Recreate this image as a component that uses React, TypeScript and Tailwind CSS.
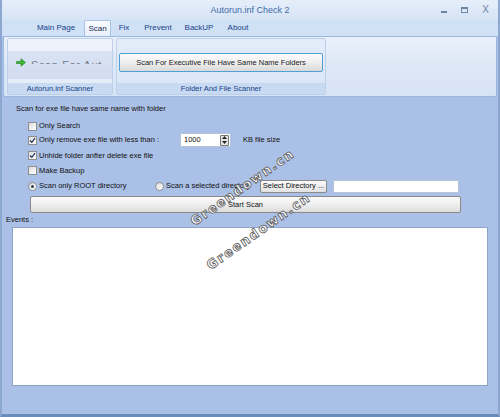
import React from 'react';

function CheckBox({ checked, label }: { checked?: boolean; label: string }) {
  return (
    <div className="flex items-center h-[14px]">
      <div className="w-[9px] h-[9px] shrink-0 border border-[#8f8f8f] bg-gradient-to-br from-[#dcdcdc] to-white flex items-center justify-center">
        {checked && (
          <svg width="7" height="7" viewBox="0 0 7 7">
            <path d="M1 3.5 L2.8 5.3 L6 1.2" stroke="#2a3b5a" strokeWidth="1.3" fill="none" />
          </svg>
        )}
      </div>
      <span className="ml-[2px] whitespace-nowrap">{label}</span>
    </div>
  );
}

function Radio({ checked, label }: { checked?: boolean; label: string }) {
  return (
    <div className="flex items-center">
      <div className="w-[9px] h-[9px] shrink-0 rounded-full border border-[#8f8f8f] bg-gradient-to-br from-[#dcdcdc] to-white flex items-center justify-center">
        {checked && <div className="w-[3px] h-[3px] rounded-full bg-[#2a3b5a]" />}
      </div>
      <span className="ml-[2px] whitespace-nowrap">{label}</span>
    </div>
  );
}

function Watermark({ className }: { className: string }) {
  return (
    <div
      className={`absolute pointer-events-none whitespace-nowrap text-white font-bold text-[13px] tracking-[1.5px] -rotate-[35deg] origin-left [-webkit-text-stroke:0.8px_#5a5a5a] ${className}`}
      style={{ fontFamily: '"DejaVu Sans", sans-serif' }}
    >
      Greendown.cn
    </div>
  );
}

export default function App() {
  return (
    <div
      className="relative w-[500px] h-[417px] overflow-hidden bg-[#aac0e6] border-l-2 border-r-2 border-b-[3px] border-l-[#8ca7d0] border-r-[#8ca7d0] border-b-[#6a8cbd] text-[7.5px] text-[#111] flex flex-col"
      style={{ fontFamily: '"Liberation Sans", Arial, sans-serif' }}
    >
      {/* title bar */}
      <div className="h-[20px] shrink-0 bg-gradient-to-b from-[#e6eefa] to-[#d6e4f6] grid grid-cols-[70px_1fr_70px] items-center">
        <div />
        <div className="text-center text-[9px] text-[#3f6aa6] pt-[1px]">Autorun.inf Check 2</div>
        <div className="flex items-center justify-end gap-[14px] pr-[9px] text-[#6e84a3]">
          <span className="w-[6px] h-[1.5px] bg-[#6e84a3] mt-[4px]" />
          <span className="w-[7px] h-[6px] border border-[#6e84a3] border-t-2" />
          <span className="text-[10px] leading-none">X</span>
        </div>
      </div>

      {/* tabs */}
      <div className="h-[16px] shrink-0 bg-[#d1e1f5] flex items-end pl-[34px] text-[8px] text-[#15428b]">
        <div className="w-[40px] h-[16px] flex items-center justify-center">Main Page</div>
        <div className="w-[27px] h-[16px] ml-[8px] flex items-center justify-center bg-gradient-to-b from-[#f9fbfe] to-[#e8effa] border border-b-0 border-[#a9c3e6] rounded-t-[2px] text-[#1a2c50]">
          Scan
        </div>
        <div className="w-[16px] h-[16px] ml-[5px] flex items-center justify-center">Fix</div>
        <div className="w-[36px] h-[16px] ml-[8px] flex items-center justify-center">Prevent</div>
        <div className="w-[34px] h-[16px] ml-[6px] flex items-center justify-center">BackUP</div>
        <div className="w-[28px] h-[16px] ml-[8px] flex items-center justify-center">About</div>
      </div>

      {/* ribbon panel */}
      <div className="h-[61px] shrink-0 mx-[1px] border border-[#9ab9e2] rounded-[2px] bg-gradient-to-b from-[#e9f0fa] via-[#dde8f7] to-[#d7e4f6] flex gap-[3px] px-[3px] pt-[1px] pb-[1px]">
        <div className="w-[106px] flex flex-col border border-[#bdd0ea] rounded-[2px] bg-gradient-to-b from-[#eef3fb] to-[#e2ebf8]">
          <div className="h-[12px]" />
          <div className="h-[28px] bg-gradient-to-b from-[#d9e3f3] to-[#d0dcf0] flex items-start pt-[9px] pl-[8px] overflow-hidden">
            <svg width="10" height="9" viewBox="0 0 10 9" className="-mt-[2px]">
              <path d="M0.5 3.5 H5 V0.8 L9.5 4.5 L5 8.2 V5.5 H0.5 Z" fill="#3dbb32" stroke="#1f7d1a" strokeWidth="0.6" />
            </svg>
            <div className="ml-[5px] h-[4px] overflow-hidden">
              <span className="block whitespace-nowrap text-[11px] leading-[11px] text-[#70798a] tracking-[0.6px]">Scan For Aut</span>
            </div>
          </div>
          <div className="flex-1" />
          <div className="h-[11px] bg-[#c8daf1] flex items-center justify-center text-[#15428b]">Autorun.inf Scanner</div>
        </div>
        <div className="w-[210px] flex flex-col border border-[#bdd0ea] rounded-[2px] bg-gradient-to-b from-[#e3ecf9] to-[#d9e5f6]">
          <div className="h-[14px]" />
          <div className="flex justify-center">
            <div className="w-[204px] h-[19px] rounded-[2px] border border-[#4fa0d6] bg-gradient-to-b from-[#fbfbfb] via-[#efefef] to-[#d9d9d9] flex items-center justify-center text-[#1a1a1a]">
              Scan For Executive File Have Same Name Folders
            </div>
          </div>
          <div className="flex-1" />
          <div className="h-[11px] bg-[#c8daf1] flex items-center justify-center text-[#15428b]">Folder And File Scanner</div>
        </div>
        <div className="flex-1" />
      </div>

      {/* body */}
      <div className="flex-1 flex flex-col pl-[12px] pr-[37px] pt-[7px]">
        <div className="h-[10px] flex items-center pl-[2px]">Scan for exe file have same name with folder</div>
        <div className="pl-[14px] mt-[5px] flex flex-col">
          <CheckBox label="Only Search" />
          <div className="flex items-center h-[16px] -mt-[1px]">
            <div className="w-[152px]">
              <CheckBox checked label="Only remove exe file with less than :" />
            </div>
            <div className="w-[51px] h-[14px] bg-white border border-[#b4c4dc] flex items-center justify-between pl-[3px] pr-[1px]">
              <span>1000</span>
              <div className="w-[9px] h-[11px] border border-[#777] rounded-[1px] bg-[#e4e4e4] flex flex-col items-center justify-around">
                <svg width="5" height="3" viewBox="0 0 5 3"><path d="M0 3 L2.5 0 L5 3 Z" fill="#222" /></svg>
                <svg width="5" height="3" viewBox="0 0 5 3"><path d="M0 0 L2.5 3 L5 0 Z" fill="#222" /></svg>
              </div>
            </div>
            <span className="ml-[12px]">KB file size</span>
          </div>
          <div className="h-[15px] flex items-center">
            <CheckBox checked label="Unhide folder anfter delete exe file" />
          </div>
          <div className="h-[15px] flex items-center">
            <CheckBox label="Make Backup" />
          </div>
          <div className="flex items-center h-[16px]">
            <div className="w-[127px]">
              <Radio checked label="Scan only ROOT directory" />
            </div>
            <div className="w-[105px] overflow-hidden">
              <Radio label="Scan a selected directory" />
            </div>
            <div className="w-[67px] h-[13px] rounded-[2px] border border-[#8a8a8a] bg-gradient-to-b from-[#fafafa] to-[#e2e2e2] flex items-center justify-center">
              Select Directory ...
            </div>
            <div className="w-[126px] h-[13px] ml-[6px] bg-white border border-[#b4c4dc]" />
          </div>
        </div>
        <div className="ml-[16px] mt-[2px] h-[17px] rounded-[2px] border border-[#8a8a8a] bg-gradient-to-b from-[#fbfbfb] via-[#eeeeee] to-[#dcdcdc] flex items-center justify-center">
          Start Scan
        </div>
      </div>
      <div className="h-[14px] shrink-0 flex items-end pl-[4px] pb-[2px]">Events :</div>
      <div className="h-[159px] shrink-0 mx-[10px] mb-[28px] bg-white border border-[#8ea4c4]" />

      <Watermark className="left-[190px] top-[213px]" />
      <Watermark className="left-[206px] top-[257px]" />
    </div>
  );
}
